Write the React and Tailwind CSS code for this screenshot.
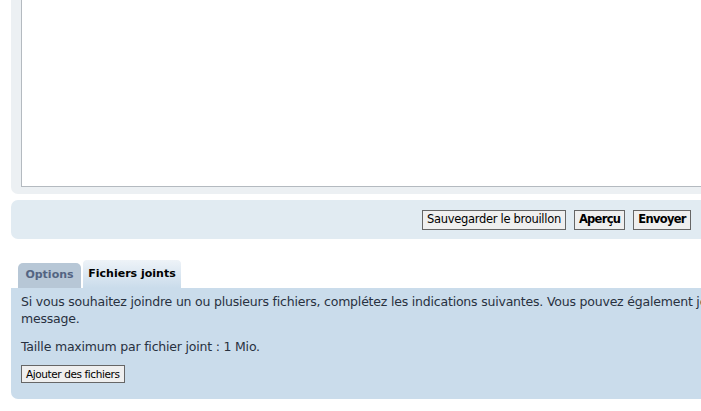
import React from "react";

function Button({ children, bold, className = "" }) {
  return (
    <button
      className={`border border-[#666] bg-[#efefef] px-[4px] text-black leading-none ${bold ? "font-bold tracking-[-0.7px]" : "tracking-[-0.3px]"} ${className}`}
    >
      {children}
    </button>
  );
}

export default function App() {
  return (
    <div className="w-[701px] h-[411px] overflow-hidden bg-white font-['DejaVu_Sans',Verdana,sans-serif] text-[#28313f]">
      <div className="w-[760px] pl-[11px]">
        {/* message box panel */}
        <div className="bg-[#ecf0f3] rounded-bl-[7px] pl-[10px] pb-[7px]">
          <textarea
            className="block w-full h-[187px] bg-white border border-[#b4bac0] border-t-0 resize-none outline-none"
            defaultValue=""
          />
        </div>

        {/* submit buttons */}
        <div className="mt-[6px] h-[39px] bg-[#e1ebf2] rounded-l-[7px] flex items-center pl-[411px] gap-[8px] text-[11.5px]">
          <Button className="h-[20px]">Sauvegarder le brouillon</Button>
          <Button bold className="h-[20px]">Aperçu</Button>
          <Button bold className="h-[20px]">Envoyer</Button>
        </div>

        {/* tabs */}
        <div className="mt-[20px] flex items-end pl-[7px] gap-[1px] text-[11px] font-bold">
          <div className="h-[25px] w-[63px] bg-[#b7c7d6] rounded-t-[5px] flex items-center justify-center text-[#536482]">
            Options
          </div>
          <div className="h-[29px] w-[100px] bg-gradient-to-b from-[#eef3f8] to-[#cadceb] border border-b-0 border-white rounded-t-[5px] flex items-center justify-center text-black">
            Fichiers joints
          </div>
        </div>

        {/* attachments panel */}
        <div className="bg-[#cadceb] rounded-bl-[7px] pl-[10px] pt-[5px] pb-[16px] text-[12.5px] leading-[17px] tracking-[-0.2px]">
          <p className="whitespace-nowrap">
            Si vous souhaitez joindre un ou plusieurs fichiers, complétez les indications suivantes. Vous pouvez également joindre des fichiers à votre
            <br />
            message.
          </p>
          <p className="mt-[11px]">Taille maximum par fichier joint : 1 Mio.</p>
          <div className="mt-[10px]">
            <Button className="h-[18px] text-[10.5px] !tracking-[-0.4px] px-[3px]">
              Ajouter des fichiers
            </Button>
          </div>
        </div>
      </div>
    </div>
  );
}
